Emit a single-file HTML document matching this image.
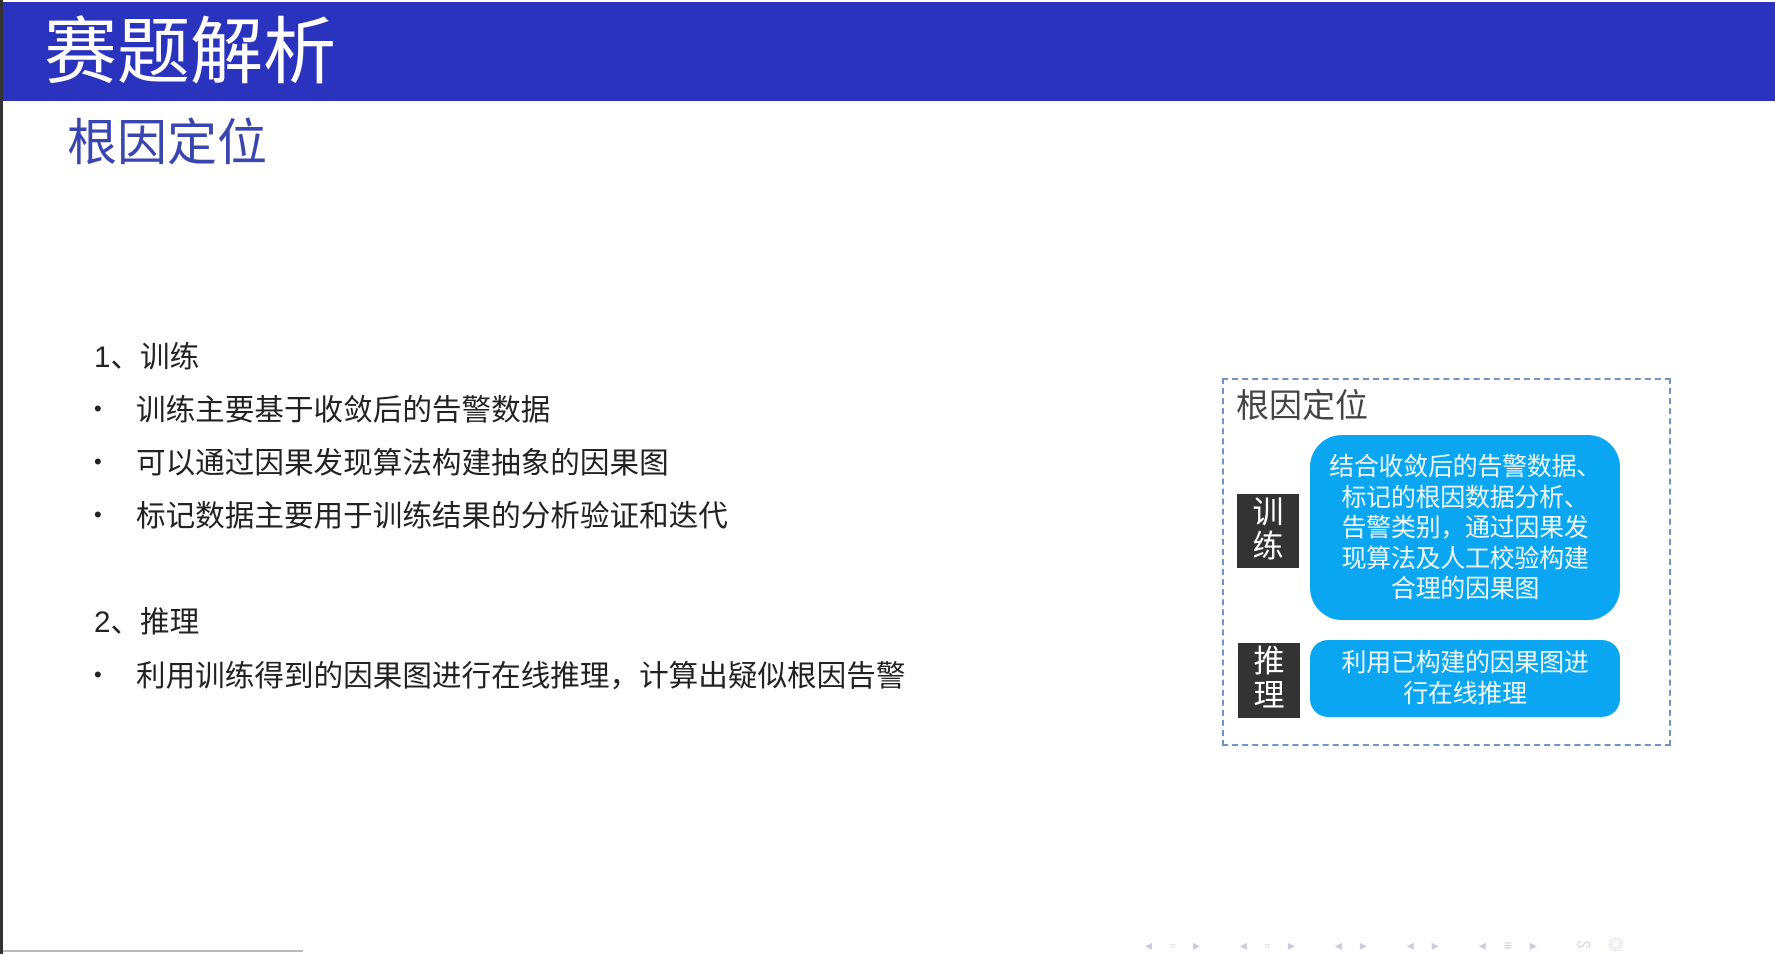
<!DOCTYPE html>
<html><head><meta charset="utf-8"><style>
body{margin:0;width:1775px;height:954px;background:#fff;position:relative;overflow:hidden;font-family:"Liberation Sans","Noto Sans CJK SC",sans-serif;}
.a{position:absolute;white-space:nowrap}
#hd{position:absolute;left:0;top:2px;width:1775px;height:99px;background:#2a33bd}
#lb{position:absolute;left:0;top:0;width:3px;height:954px;background:#333}
.t{font-size:29.6px;color:#222;line-height:36px}
.bul{font-size:22px;color:#222}
.lab{position:absolute;background:#333;color:#fff;font-size:31px;line-height:34px;text-align:center;width:62px}
.blue{position:absolute;background:#0aa6f2;color:#eefaff;font-size:25px;line-height:30.5px;text-align:center;letter-spacing:-0.3px}
</style></head><body>
<div id="hd"></div><div id="lb"></div>
<div class="a" style="left:44px;top:8px;font-size:73px;color:#fff;line-height:90px">赛题解析</div>
<div class="a" style="left:67px;top:113px;font-size:50px;color:#3a46b0;line-height:60px">根因定位</div>
<div class="a t" style="left:94px;top:340px">1、训练</div>
<div class="a bul" style="left:94px;top:396px">•</div><div class="a t" style="left:136px;top:393px">训练主要基于收敛后的告警数据</div>
<div class="a bul" style="left:94px;top:449px">•</div><div class="a t" style="left:136px;top:446px">可以通过因果发现算法构建抽象的因果图</div>
<div class="a bul" style="left:94px;top:502px">•</div><div class="a t" style="left:136px;top:499px">标记数据主要用于训练结果的分析验证和迭代</div>
<div class="a t" style="left:94px;top:605px">2、推理</div>
<div class="a bul" style="left:94px;top:662px">•</div><div class="a t" style="left:136px;top:659px">利用训练得到的因果图进行在线推理，计算出疑似根因告警</div>
<div style="position:absolute;left:1222px;top:378px;width:445px;height:364px;border:2px dashed #6f95c8"></div>
<div class="a" style="left:1236px;top:385px;font-size:33px;color:#444;line-height:42px">根因定位</div>
<div class="lab" style="left:1237px;top:494px;height:72px;padding-top:2px">训<br>练</div>
<div class="lab" style="left:1238px;top:643px;height:73px;padding-top:2px">推<br>理</div>
<div class="blue" style="left:1310px;top:435px;width:310px;height:185px;border-radius:32px;padding-top:17px;box-sizing:border-box">结合收敛后的告警数据、<br>标记的根因数据分析、<br>告警类别，通过因果发<br>现算法及人工校验构建<br>合理的因果图</div>
<div class="blue" style="left:1310px;top:640px;width:310px;height:77px;border-radius:18px;padding-top:8px;box-sizing:border-box">利用已构建的因果图进<br>行在线推理</div>
<div style="position:absolute;left:3px;top:950px;width:300px;height:2px;background:#bbb"></div>
<div class="a" style="left:1145px;top:935px;font-size:14px;color:#ccd;letter-spacing:18px">◂▫▸ ◂▫▸ ◂▸ ◂▸ ◂≡▸ ∽◎</div>
</body></html>
